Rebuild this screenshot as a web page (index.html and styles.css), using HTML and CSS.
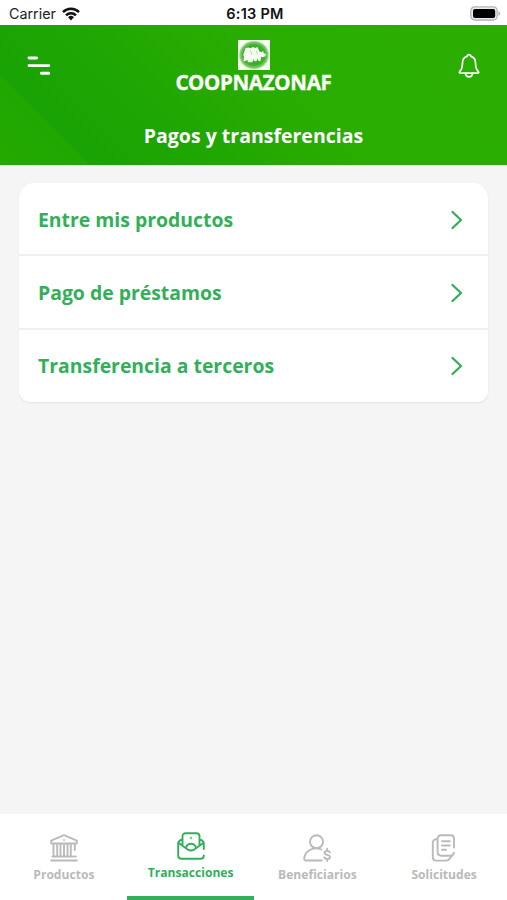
FILE: index.html
```html
<!DOCTYPE html>
<html lang="es">
<head>
<meta charset="utf-8">
<title>Pagos y transferencias</title>
<link rel="stylesheet" href="styles.css">
</head>
<body>
<div class="app">
  <div class="status">
    <div class="carrier"><span>Carrier</span>
      <svg width="18" height="14" viewBox="0 0 18 14"><g fill="none" stroke="#111" stroke-width="2.5"><path d="M1 5.1a11.3 11.3 0 0 1 16 0"/><path d="M4 8.3a7 7 0 0 1 10 0"/></g><path fill="#111" d="M6.1 10.3a4.1 4.1 0 0 1 5.8 0L9 13.4z"/></svg>
    </div>
    <div class="clock">6:13 PM</div>
    <svg class="battery" width="31" height="15" viewBox="0 0 31 15"><rect x=".8" y=".8" width="26.4" height="13.2" rx="4" fill="#ececec" stroke="#b4b4b4" stroke-width="1.3"/><rect x="3" y="3" width="22.2" height="9" rx="2" fill="#000"/><path d="M28.5 5.2c2.3 1 2.3 3.6 0 4.6z" fill="#b4b4b4"/></svg>
  </div>
  <header class="header">
    <div class="bar">
      <svg class="menu" width="24" height="20" viewBox="0 0 24 20"><path d="M2 2h7.6M2 9.6h19.8M14.4 17.3h7.4" stroke="#fff" stroke-width="2.9" stroke-linecap="round"/></svg>
      <div class="brand">
        <svg width="32" height="30" viewBox="0 0 32 30">
          <defs><radialGradient id="halo"><stop offset=".5" stop-color="#36ab22"/><stop offset=".82" stop-color="#4cb639"/><stop offset="1" stop-color="#e4f7df"/></radialGradient></defs>
          <rect width="32" height="30" fill="#f4fff0"/><ellipse cx="16" cy="15" rx="15.4" ry="14.6" fill="url(#halo)"/>
          <ellipse cx="16" cy="15" rx="12.6" ry="11.8" fill="none" stroke="#8ad07d" stroke-width=".6"/>
          <path fill="#f4fff0" d="M7.5 8l3-.6 2 .8L15 7l2 1 2.500-1 2 4.500 2 .6 2-.8v1.800l2.500 1.200-.8 2-2.700 1-1.500-.4-.5 4-1.800.3-1-2.700-1.200 2.700h-2l-1-2-1 3H10l-.8-2.500-2 1.500-1.700-.5.500-4-.8-2 .8-2z"/><path d="M12 10l2 5M18.500 10.500l1 4" stroke="#7fcb70" stroke-width=".6"/>
        </svg>
        <div class="name">COOPNAZONAF</div>
      </div>
      <svg class="bell" width="22" height="26" viewBox="0 0 22 26"><g fill="none" stroke="#fff" stroke-width="1.7" stroke-linejoin="round" stroke-linecap="round"><path d="M9.200 3.400C9.200 1 12.800 1 12.800 3.400c3 .9 4.700 3.300 4.700 6.400 0 4.800.5 6.700 2.800 8.700.9.900.3 1.700-.7 1.700H2.400c-1 0-1.600-.8-.7-1.700 2.300-2 2.800-3.900 2.800-8.700 0-3.100 1.700-5.500 4.700-6.400z"/><path d="M7.500 20.400c.5 4.700 6.500 4.700 7 0"/></g></svg>
    </div>
    <h1>Pagos y transferencias</h1>
  </header>
  <main>
    <div class="list">
      <div class="row"><span>Entre mis productos</span><svg width="12" height="20" viewBox="0 0 12 20"><path d="M1.500 2l8.500 8-8.500 8"/></svg></div>
      <div class="row"><span>Pago de préstamos</span><svg width="12" height="20" viewBox="0 0 12 20"><path d="M1.500 2l8.500 8-8.500 8"/></svg></div>
      <div class="row"><span>Transferencia a terceros</span><svg width="12" height="20" viewBox="0 0 12 20"><path d="M1.500 2l8.500 8-8.500 8"/></svg></div>
    </div>
  </main>
  <nav>
    <div class="tab"><svg width="28" height="28" viewBox="0 0 28 28"><path d="M24.800 10v6M3.500 10v11.500M7.200 10v11.500M10.500 10v11.500M14 10v11.500M17.500 10v11.500M20.800 10v11.500M1.200 9.500V6.600L14 1.200l12.800 5.400v2.900zM2.500 22.500h20.300M24.500 22.500h1.300M1.200 26.500h25.600"/><circle cx="14" cy="6" r=".3"/></svg><span>Productos</span></div>
    <div class="tab active"><svg width="28" height="28" viewBox="0 0 28 28"><path d="M5.500 13V4.200c0-1.800 1.200-2.900 3-2.900h11c1.800 0 3 1.100 3 2.900V13M5.500 7.500C2.800 8.200 1.200 9.500 1.200 11.500v11.900c0 2 1.200 3.300 3.200 3.300h19.200c2 0 3.200-1.300 3.200-3.300M22.500 7.500c2.700.7 4.300 2 4.300 4v5.500M1.400 10.800L9 16.200M26.600 10.800L19 16.200M8.800 15.800c1.800-5.400 8.600-5.400 10.400 0-2.500 3.600-7.900 3.600-10.400 0z"/><circle cx="14" cy="6" r=".3"/></svg><span>Transacciones</span></div>
    <div class="tab"><svg width="28" height="28" viewBox="0 0 28 28"><circle cx="13.500" cy="7.700" r="6.500"/><path d="M18.500 15.500c-7-3-17 .5-17.300 9.500 0 1 .5 1.500 1.500 1.500h16"/><path d="M26.800 18.300c-.8-2-5.300-1.800-5.300.5 0 2.600 5.500 1.400 5.500 4.200 0 2.500-5 2.600-5.700.4M24.200 14.800v2.200M24.200 25v2"/></svg><span>Beneficiarios</span></div>
    <div class="tab"><svg width="28" height="28" viewBox="0 0 28 28"><path d="M24 13.500V4.700c0-2-1.400-3.400-3.400-3.400H11c-2 0-3.400 1.400-3.400 3.400v13.600c0 2 1.400 3.400 3.400 3.400h8.800c2.300 0 3.800-1.200 4.200-3M7.600 5C4.500 5 2.800 6.300 2.800 8.500v14.800c0 2 1.400 3.300 3.400 3.300h9.800c2 0 3-1 4-2.300l2.500-3.300M12 7.200h7.800M12 11.500h7.800M12 15.800h4"/></svg><span>Solicitudes</span></div>
  </nav>
</div>
</body>
</html>
```
FILE: styles.css
```css
* { box-sizing: border-box; }
body { margin: 0; font-family: "Open Sans", sans-serif; }
.app { width: 507px; height: 900px; display: flex; flex-direction: column; background: #f5f5f5; overflow: hidden; }
.status { height: 25px; flex: none; background: #fff; display: grid; grid-template-columns: 1fr auto 1fr; align-items: center; padding: 2px 6px 0 9px; font: 14.3px/18px Inter, sans-serif; color: #222; }
.carrier { display: flex; align-items: center; gap: 6px; }
.clock { font-weight: 600; color: #111; font-size: 14.5px; letter-spacing: .25px; }
.battery { justify-self: end; }
.header { height: 140px; flex: none; color: #fff; background: linear-gradient(45deg, #24a900 0%, #20a702 13.8%, #19a304 14.1%, #1ca503 26%, #22a802 40.5%, #25a902 42%, #2aad01 58%, #2bad02 100%); }
.bar { height: 81px; display: grid; grid-template-columns: 1fr auto 1fr; padding: 0 27px; }
.menu { margin-top: 31px; }
.bell { margin-top: 28px; justify-self: end; }
.brand { display: flex; flex-direction: column; align-items: center; padding-top: 15px; }
.brand svg { flex: none; }
.name { font: 700 20.6px/24px "Noto Sans", sans-serif; letter-spacing: -.3px; -webkit-text-stroke: .3px #fff; }
h1 { margin: 16px 0 0; text-align: center; font-size: 19.5px; line-height: 28px; font-weight: 700; }
main { flex: 1; padding: 18px 19px; }
.list { border-radius: 15px 15px 11px 11px; overflow: hidden; background: #fff; box-shadow: 0 1px 2px rgba(0, 0, 0, .08); }
.row { height: 73.3px; display: flex; align-items: center; justify-content: space-between; padding: 2px 25px 0 19px; color: #33af59; font-size: 19.4px; font-weight: 700; border-bottom: 2px solid #f0f0f0; }
.row:last-child { height: 72px; padding-top: 0; border-bottom: 0; }
.row svg { fill: none; stroke: #33af59; stroke-width: 2.3; stroke-linecap: round; stroke-linejoin: round; }
nav { height: 86px; flex: none; background: #fff; display: grid; grid-template-columns: repeat(4, 1fr); }
.tab { display: flex; flex-direction: column; align-items: center; padding: 20px 0 0 1px; color: #bababa; font-size: 12.1px; line-height: 17px; font-weight: 700; gap: 4px; }
.tab svg { fill: none; stroke: currentColor; stroke-width: 1.9; stroke-linecap: round; stroke-linejoin: round; }
.active { padding-top: 18px; color: #33af59; border-bottom: 4px solid #33af59; }
```
